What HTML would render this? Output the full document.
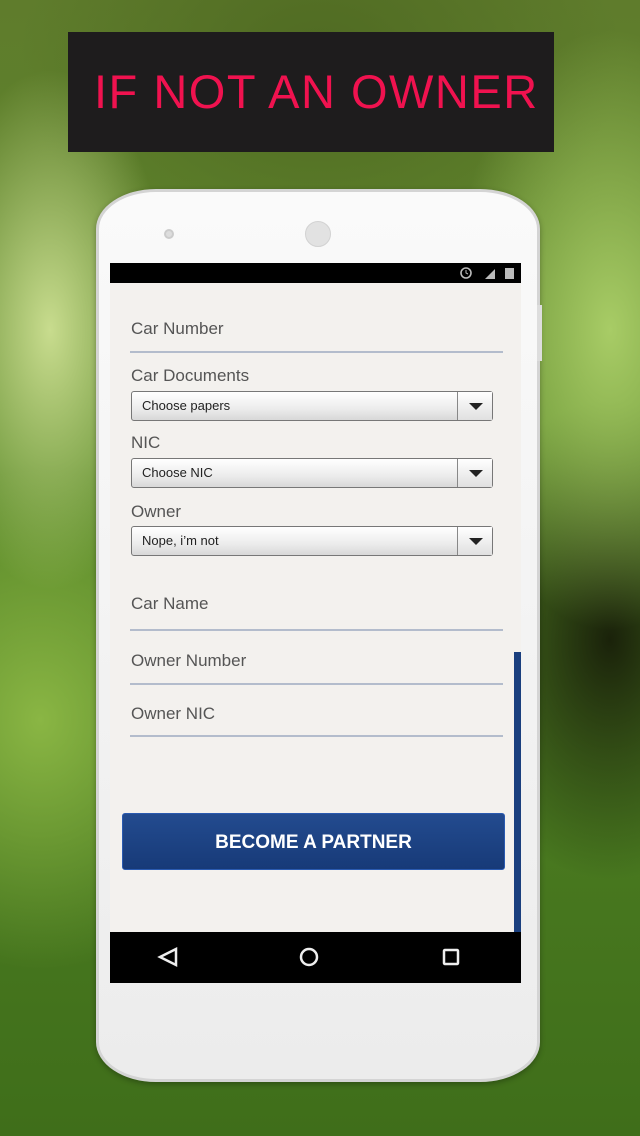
<!DOCTYPE html>
<html><head><style>
*{margin:0;padding:0;box-sizing:border-box}
body{width:640px;height:1136px;overflow:hidden;position:relative;font-family:"Liberation Sans",sans-serif;
background:
radial-gradient(ellipse 120px 260px at 50px 330px,#c8dc8e 0%,rgba(150,190,90,0) 100%),
radial-gradient(ellipse 160px 300px at 610px 330px,#a8cc66 0%,rgba(120,170,60,0) 100%),
radial-gradient(ellipse 160px 240px at 610px 640px,#1a220a 0%,rgba(30,40,10,0) 100%),
radial-gradient(ellipse 200px 250px at 40px 720px,#8ab644 0%,rgba(100,150,40,0) 100%),
radial-gradient(ellipse 300px 220px at 320px 60px,#4f6a22 0%,rgba(80,110,30,0) 100%),
linear-gradient(180deg,#5f7c2c 0%,#5c8a2a 40%,#4a7a20 70%,#3f6e1a 100%);}
.banner{position:absolute;left:68px;top:32px;width:486px;height:120px;background:#1e1c1d;color:#f0124f;font-size:47px;line-height:120px;padding-left:26px;letter-spacing:1.5px;white-space:nowrap}
.phone{position:absolute;left:96px;top:189px;width:444px;height:893px;background:linear-gradient(#fafafa,#ececec);border-radius:60px/40px;border:3px solid #d4d4d4;box-shadow:0 2px 6px rgba(0,0,0,.3)}
.cam{position:absolute;left:164px;top:229px;width:10px;height:10px;border-radius:50%;background:#ddd;border:2px solid #ccc}
.spk{position:absolute;left:305px;top:221px;width:26px;height:26px;border-radius:50%;background:#e2e2e2;border:1px solid #d2d2d2}
.btnside{position:absolute;left:537px;top:305px;width:5px;height:56px;background:#ddd}
.screen{position:absolute;left:110px;top:263px;width:411px;height:720px;background:#f3f1ee;overflow:hidden}
.status{position:absolute;left:0;top:0;width:411px;height:20px;background:#000}
.nav{position:absolute;left:0;top:669px;width:411px;height:51px;background:#000}
.lbl{position:absolute;left:21px;font-size:17px;color:#555}
.line{position:absolute;left:20px;width:373px;height:2px;background:#b3bccc}
.sp{position:absolute;left:21px;width:362px;height:30px;border:1px solid #777;border-radius:3px;background:linear-gradient(#fff,#ececec 60%,#d8d8d8);font-size:13px;color:#222;padding-left:10px;line-height:28px}
.sp .ar{position:absolute;right:0;top:0;width:35px;height:28px;border-left:1px solid #888;background:linear-gradient(#fff,#e0e0e0)}
.sp .ar:after{content:"";position:absolute;left:11px;top:11px;border-left:7px solid transparent;border-right:7px solid transparent;border-top:7px solid #222}
.btn{position:absolute;left:12px;top:550px;width:383px;height:57px;background:linear-gradient(#234b8f,#173a78);border:1px solid #2a5ab0;border-radius:3px;color:#fff;font-size:19px;font-weight:bold;text-align:center;line-height:57px}
.scroll{position:absolute;left:404px;top:389px;width:7px;height:280px;background:#1a3f7e}
</style></head><body>
<div class="banner">IF NOT AN OWNER</div>
<div class="phone"></div>
<div class="cam"></div><div class="spk"></div><div class="btnside"></div>
<div class="screen">
<div class="status">
<svg style="position:absolute;left:349px;top:3px" width="60" height="14"><circle cx="7" cy="7" r="5" fill="none" stroke="#bbb" stroke-width="1.6"/><path d="M7 4v3l2 1" stroke="#bbb" fill="none"/><path d="M26 13L36 3V13Z" fill="#bbb"/><rect x="46" y="2" width="9" height="11" fill="#bbb"/></svg>
</div>
<div class="lbl" style="top:56px">Car Number</div>
<div class="line" style="top:88px"></div>
<div class="lbl" style="top:103px">Car Documents</div>
<div class="sp" style="top:128px">Choose papers<div class="ar"></div></div>
<div class="lbl" style="top:170px">NIC</div>
<div class="sp" style="top:195px">Choose NIC<div class="ar"></div></div>
<div class="lbl" style="top:239px">Owner</div>
<div class="sp" style="top:263px">Nope, i’m not<div class="ar"></div></div>
<div class="lbl" style="top:331px">Car Name</div>
<div class="line" style="top:366px"></div>
<div class="lbl" style="top:388px">Owner Number</div>
<div class="line" style="top:420px"></div>
<div class="lbl" style="top:441px">Owner NIC</div>
<div class="line" style="top:472px"></div>
<div class="scroll"></div>
<div class="btn">BECOME A PARTNER</div>
<div class="nav">
<svg width="411" height="51"><path d="M66 17L50 25L66 33Z" fill="none" stroke="#eee" stroke-width="2.5"/><circle cx="199" cy="25" r="8" fill="none" stroke="#eee" stroke-width="2.5"/><rect x="334" y="18" width="14" height="14" rx="1" fill="none" stroke="#eee" stroke-width="2.5"/></svg>
</div>
</div>
</body></html>
